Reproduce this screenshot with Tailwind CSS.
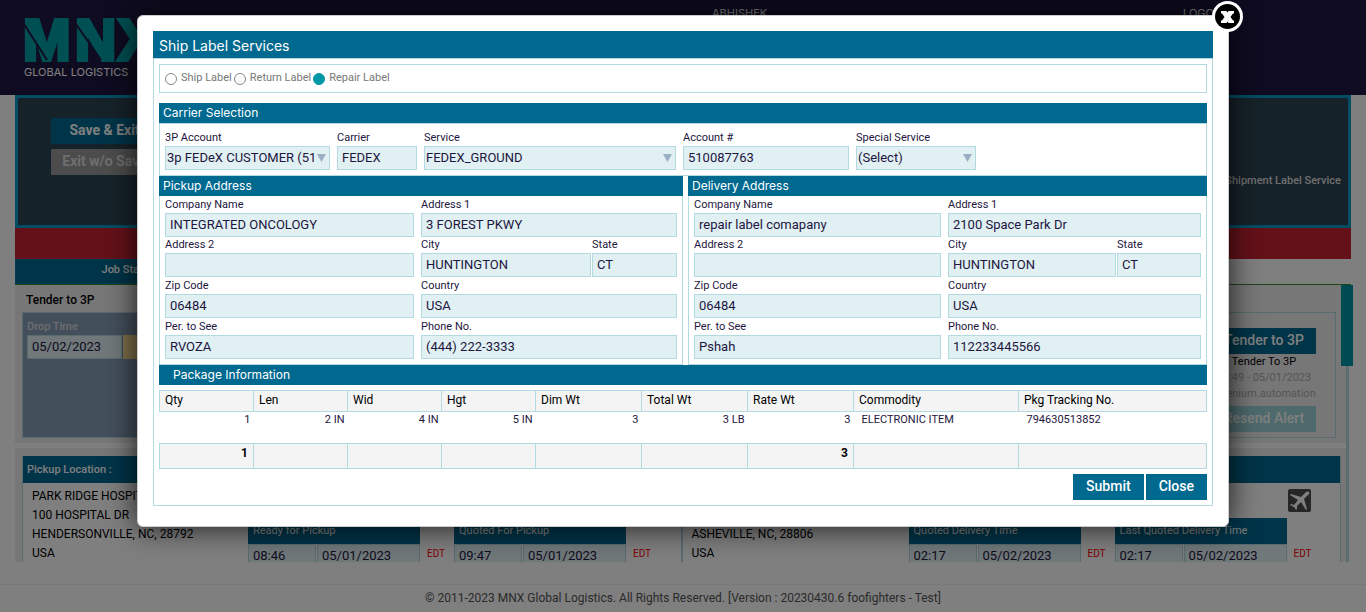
<!DOCTYPE html>
<html lang="en">
<head>
<meta charset="utf-8">
<title>MNX Global Logistics - Ship Label Services</title>
<script src="https://cdn.jsdelivr.net/npm/@tailwindcss/browser@4"></script>
</head>
<body class="relative min-h-screen overflow-hidden bg-white font-['Roboto',sans-serif] text-xs text-black">

<!-- Page header -->
<header class="flex h-[95px] bg-[#1e1640] text-white">
  <div class="w-[712px] pt-[18px] pl-6">
    <svg class="block overflow-visible" width="136" height="45" viewBox="0 0 136 45" role="img" aria-label="MNX">
      <g fill="#009fa6" stroke="#009fa6" stroke-width="4" font-family="Liberation Sans, sans-serif" font-weight="700" font-size="57">
        <text x="-1" y="42">M</text><text x="51" y="42">N</text><text x="94" y="42">X</text>
      </g>
      <path d="M0 6 23 42M52 6 77 42" stroke="#1e1640" stroke-width="2" fill="none"/>
    </svg>
    <div class="mt-[2px] font-['Inter',sans-serif] text-[11px] leading-[14px]">GLOBAL LOGISTICS</div>
  </div>
  <div class="grow pt-[6px] font-['Inter',sans-serif] text-[11px] leading-[14px]">ABHISHEK</div>
  <a href="#" class="w-[183px] pt-[6px] font-['Inter',sans-serif] text-[11px] leading-[14px]">LOGOUT</a>
</header>

<main class="mr-[13px] ml-[15px]">
  <section class="mr-[2px] flex h-[133px] justify-between border-[3px] border-[#009ac8] bg-[#2c4452] text-white">
    <div class="ml-[33px] flex w-[107px] flex-col gap-[5px] pt-5">
      <button class="h-[26px] bg-[#006990] pb-[2px] text-sm font-bold">Save &amp; Exit</button>
      <button class="h-[26px] bg-[#999999] pb-[2px] text-sm font-bold whitespace-nowrap text-[#dddddd]">Exit w/o Save</button>
    </div>
    <div class="pt-[74px] pr-[7px]"><a href="#" class="text-[11px] leading-4 font-medium text-[#dddddd]">Shipment Label Service</a></div>
  </section>
  <div class="mr-[2px] h-[31px] bg-[#c82232]"></div>
  <div class="mr-[2px] h-[26px] border-b border-[#38902c]">
    <div class="h-[25px] w-[226px] border border-[#007ba5] bg-[#006990] pt-[2px] text-center text-[11px] leading-4 font-medium text-white">Job Status</div>
  </div>

  <div class="flex h-[277px] overflow-hidden">
    <div class="grow">
      <section class="h-[158px] bg-[#eeeeee] px-[7px] pt-[7px]">
        <h2 class="pl-1 leading-4 font-medium">Tender to 3P</h2>
        <div class="mt-[4px] mr-[3px] flex h-[126px] justify-between border border-[#b0d6dc]">
          <div class="w-[600px] bg-[#869eb6] px-1 pt-[5px]">
            <label for="drop" class="block text-[11px] leading-[17px] font-medium text-[#dddddd]">Drop Time</label>
            <div class="flex gap-[1px]">
              <input id="drop" value="05/02/2023" class="h-6 w-[95px] border border-[#b0d6dc] bg-[#e0f0f3] px-1 pb-[2px] text-[13px] text-[#1e1640]">
              <input aria-label="Drop hour" class="h-6 w-10 bg-[#ffdf96]">
            </div>
          </div>
          <div class="mr-[19px] flex w-[104px] flex-col pt-[15px] text-center text-[11px] leading-4">
            <button class="h-[26px] bg-[#006990] pb-[2px] text-sm font-medium text-white">Tender to 3P</button>
            <span>Tender To 3P</span>
            <span class="text-[#aaaaaa]">12:49 - 05/01/2023</span>
            <span class="text-[#aaaaaa]">selenium.automation</span>
            <button class="mt-[4px] h-[26px] bg-[#9cd4d8] pb-[2px] text-sm font-medium text-white">Resend Alert</button>
          </div>
        </div>
      </section>
      <section class="mt-[5px] flex h-[114px] bg-[#eeeeee] pt-2 pr-[5px] pl-[7px]">
        <div class="flex-1 border-x border-[#b0d6dc] bg-white">
          <h3 class="h-[27px] bg-[#006990] px-1 text-[11px] leading-[27px] font-medium text-white">Pickup Location :</h3>
          <div class="flex">
            <address class="w-[225px] shrink-0 pt-[4px] pl-[9px] leading-[19px] whitespace-nowrap not-italic">PARK RIDGE HOSPITAL<br>100 HOSPITAL DR<br>HENDERSONVILLE, NC, 28792<br>USA</address>
            <div class="flex pt-[35px]">
              <div class="w-[172px]">
                <div class="h-[26px] bg-[#006990] px-[5px] text-[11px] leading-[25px] text-white">Ready for Pickup</div>
                <div class="flex gap-[1px]"><input aria-label="Ready time" value="08:46" class="h-6 w-[68px] border border-[#b0d6dc] bg-[#e0f0f3] px-1 pb-[2px] text-[13px] text-[#1e1640]"><input aria-label="Ready date" value="05/01/2023" class="h-6 w-[103px] border border-[#b0d6dc] bg-[#e0f0f3] px-1 pb-[2px] text-[13px] text-[#1e1640]"></div>
              </div>
              <span class="w-[34px] pt-[28px] pl-[7px] text-[10px] leading-4 text-[#ff0000]">EDT</span>
              <div class="w-[172px]">
                <div class="h-[26px] bg-[#006990] px-[5px] text-[11px] leading-[25px] text-white">Quoted For Pickup</div>
                <div class="flex gap-[1px]"><input aria-label="Quoted time" value="09:47" class="h-6 w-[68px] border border-[#b0d6dc] bg-[#e0f0f3] px-1 pb-[2px] text-[13px] text-[#1e1640]"><input aria-label="Quoted date" value="05/01/2023" class="h-6 w-[103px] border border-[#b0d6dc] bg-[#e0f0f3] px-1 pb-[2px] text-[13px] text-[#1e1640]"></div>
              </div>
              <span class="w-[34px] pt-[28px] pl-[7px] text-[10px] leading-4 text-[#ff0000]">EDT</span>
            </div>
          </div>
        </div>
        <div class="flex-1 border-x border-[#b0d6dc] bg-white">
          <h3 class="h-[27px] bg-[#006990] px-1 text-[11px] leading-[27px] font-medium text-white">Delivery Location :</h3>
          <div class="relative flex">
            <address class="w-[226px] shrink-0 pt-[4px] pl-[9px] leading-[19px] whitespace-nowrap not-italic">MISSION HOSPITAL<br>509 BILTMORE AVE<br>ASHEVILLE, NC, 28806<br>USA</address>
            <div class="flex pt-[35px]">
              <div class="w-[172px]">
                <div class="h-[26px] bg-[#006990] px-[5px] text-[11px] leading-[25px] text-white">Quoted Delivery Time</div>
                <div class="flex gap-[1px]"><input aria-label="Delivery time" value="02:17" class="h-6 w-[68px] border border-[#b0d6dc] bg-[#e0f0f3] px-1 pb-[2px] text-[13px] text-[#1e1640]"><input aria-label="Delivery date" value="05/02/2023" class="h-6 w-[103px] border border-[#b0d6dc] bg-[#e0f0f3] px-1 pb-[2px] text-[13px] text-[#1e1640]"></div>
              </div>
              <span class="w-[34px] pt-[28px] pl-[7px] text-[10px] leading-4 text-[#ff0000]">EDT</span>
              <div class="w-[172px]">
                <div class="h-[26px] bg-[#006990] px-[5px] text-[11px] leading-[25px] text-white">Last Quoted Delivery Time</div>
                <div class="flex gap-[1px]"><input aria-label="Last delivery time" value="02:17" class="h-6 w-[68px] border border-[#b0d6dc] bg-[#e0f0f3] px-1 pb-[2px] text-[13px] text-[#1e1640]"><input aria-label="Last delivery date" value="05/02/2023" class="h-6 w-[103px] border border-[#b0d6dc] bg-[#e0f0f3] px-1 pb-[2px] text-[13px] text-[#1e1640]"></div>
              </div>
              <span class="w-[34px] pt-[28px] pl-[7px] text-[10px] leading-4 text-[#ff0000]">EDT</span>
            </div>
            <svg class="absolute top-[6px] right-[29px]" width="23" height="23" viewBox="0 0 23 23" role="img" aria-label="Air">
              <rect width="23" height="23" rx="2" fill="#4c4c4c"/>
              <path d="M21 3c-1-1-3 0-4 1l-4 4L3 5 2 6l8 5-4 5-3-1-1 1 4 2 2 3 1-1v-3l4-4 5 8 1-1-3-10 4-4c1-1 2-2 1-3z" fill="#fff"/>
            </svg>
          </div>
        </div>
      </section>
    </div>
    <div class="-ml-[5px] flex w-3 flex-col items-center">
      <div class="h-[81px] w-3 bg-[#0097a7]"></div>
      <div class="w-[3px] grow bg-[#b9dbe4]"></div>
    </div>
  </div>
</main>

<footer class="mt-[22px] border-t border-[#f0f0f0] pt-[5px] text-center leading-4 text-[#555555]">© 2011-2023 MNX Global Logistics. All Rights Reserved. [Version : 20230430.6 foofighters - Test]</footer>

<!-- Dialog over the dimmed page -->
<div class="absolute inset-0 bg-black/50 px-[137px] pt-[15px]">
  <div role="dialog" aria-labelledby="dlg-title" class="relative rounded-md border border-[#cccccc] bg-white px-[15px] pt-[15px] pb-[20px] text-[#1e1640] shadow-[0_0_30px_rgba(0,0,0,0.8)]">
    <button aria-label="Close dialog" class="absolute -top-[15px] -right-[15px]">
      <svg class="block" width="31" height="31" viewBox="0 0 31 31"><circle cx="15.500" cy="15.500" r="15.500" fill="#fff"/><circle cx="15.500" cy="15.500" r="12.500" fill="#000"/><path d="M9 10h5.500l1 1.500 1-1.500H22v2.500h-1L18.500 16l2.500 3.500h1V22h-5.500l-1-1.500-1 1.500H9v-2.500h1l2.500-3.500L10 12.500H9z" fill="#fff"/></svg>
    </button>

    <h1 id="dlg-title" class="h-[27px] bg-[#006990] px-[6px] font-['Inter',sans-serif] text-sm leading-[30px] text-white">Ship Label Services</h1>
    <form class="border border-[#b3dae0] px-[5px] pt-[5px] pb-[5px]">
      <fieldset class="flex h-[29px] items-center gap-[2px] border border-[#b3dae0] px-[5px] text-[11px] text-[#777777]">
        <label class="flex items-center gap-1"><input type="radio" name="label" class="size-3 appearance-none rounded-full border border-[#888888] checked:border-[#0097a7] checked:bg-[#0097a7]">Ship Label</label>
        <label class="flex items-center gap-1"><input type="radio" name="label" class="size-3 appearance-none rounded-full border border-[#888888] checked:border-[#0097a7] checked:bg-[#0097a7]">Return Label</label>
        <label class="flex items-center gap-1"><input type="radio" name="label" checked class="size-3 appearance-none rounded-full border border-[#888888] checked:border-[#0097a7] checked:bg-[#0097a7]">Repair Label</label>
      </fieldset>

      <h2 class="mt-[10px] h-5 bg-[#006990] px-1 font-['Inter',sans-serif] text-xs leading-[19px] text-white">Carrier Selection</h2>
      <div class="flex h-[53px] gap-[7px] border border-[#b3dae0] px-[5px] pt-[5px]">
        <div class="w-[165px]">
          <label for="acct3p" class="block text-[11px] leading-[17px]">3P Account</label>
          <div class="relative">
            <select id="acct3p" class="block h-6 w-full appearance-none border border-[#b3dae0] bg-[#e0f0f3] pr-[14px] pl-px text-[13px]"><option>3p FEDeX CUSTOMER (510087763)</option></select>
            <svg class="pointer-events-none absolute top-2 right-1" width="9" height="8" viewBox="0 0 9 8"><path d="M0 0h9L4.500 8z" fill="#9ab0c2"/></svg>
          </div>
        </div>
        <div class="w-20"><label for="carrier" class="block text-[11px] leading-[17px]">Carrier</label><input id="carrier" value="FEDEX" class="block h-6 w-full border border-[#b3dae0] bg-[#e0f0f3] px-1 pb-[2px] text-[13px]"></div>
        <div class="w-[252px]">
          <label for="service" class="block text-[11px] leading-[17px]">Service</label>
          <div class="relative">
            <select id="service" class="block h-6 w-full appearance-none border border-[#b3dae0] bg-[#e0f0f3] pr-[14px] pl-px text-[13px]"><option>FEDEX_GROUND</option></select>
            <svg class="pointer-events-none absolute top-2 right-1" width="9" height="8" viewBox="0 0 9 8"><path d="M0 0h9L4.500 8z" fill="#9ab0c2"/></svg>
          </div>
        </div>
        <div class="w-[166px]"><label for="account" class="block text-[11px] leading-[17px]">Account #</label><input id="account" value="510087763" class="block h-6 w-full border border-[#b3dae0] bg-[#e0f0f3] px-1 pb-[2px] text-[13px]"></div>
        <div class="w-[120px]">
          <label for="special" class="block text-[11px] leading-[17px]">Special Service</label>
          <div class="relative">
            <select id="special" class="block h-6 w-full appearance-none border border-[#b3dae0] bg-[#e0f0f3] pr-[14px] pl-px text-[13px]"><option>(Select)</option></select>
            <svg class="pointer-events-none absolute top-2 right-1" width="9" height="8" viewBox="0 0 9 8"><path d="M0 0h9L4.500 8z" fill="#9ab0c2"/></svg>
          </div>
        </div>
      </div>

      <div class="grid grid-cols-[524fr_519fr] gap-[5px]">
        <section>
          <h2 class="h-5 bg-[#006990] px-1 font-['Inter',sans-serif] text-xs leading-[19px] text-white">Pickup Address</h2>
          <div class="grid grid-cols-[249fr_256fr] gap-x-[7px] border-x border-b border-[#b3dae0] px-[5px] pb-[5px]">
            <div><label for="p-co" class="block text-[11px] leading-[17px]">Company Name</label><input id="p-co" value="INTEGRATED ONCOLOGY" class="block h-6 w-full border border-[#b3dae0] bg-[#e0f0f3] px-1 pb-[2px] text-[13px]"></div>
            <div><label for="p-a1" class="block text-[11px] leading-[17px]">Address 1</label><input id="p-a1" value="3 FOREST PKWY" class="block h-6 w-full border border-[#b3dae0] bg-[#e0f0f3] px-1 pb-[2px] text-[13px]"></div>
            <div><label for="p-a2" class="block text-[11px] leading-4">Address 2</label><input id="p-a2" class="block h-6 w-full border border-[#b3dae0] bg-[#e0f0f3] px-1 pb-[2px] text-[13px]"></div>
            <div class="grid grid-cols-[2fr_1fr] gap-px">
              <div><label for="p-city" class="block text-[11px] leading-4">City</label><input id="p-city" value="HUNTINGTON" class="block h-6 w-full border border-[#b3dae0] bg-[#e0f0f3] px-1 pb-[2px] text-[13px]"></div>
              <div><label for="p-st" class="block text-[11px] leading-4">State</label><input id="p-st" value="CT" class="block h-6 w-full border border-[#b3dae0] bg-[#e0f0f3] px-1 pb-[2px] text-[13px]"></div>
            </div>
            <div><label for="p-zip" class="block text-[11px] leading-[17px]">Zip Code</label><input id="p-zip" value="06484" class="block h-6 w-full border border-[#b3dae0] bg-[#e0f0f3] px-1 pb-[2px] text-[13px]"></div>
            <div><label for="p-ctry" class="block text-[11px] leading-[17px]">Country</label><input id="p-ctry" value="USA" class="block h-6 w-full border border-[#b3dae0] bg-[#e0f0f3] px-1 pb-[2px] text-[13px]"></div>
            <div><label for="p-per" class="block text-[11px] leading-[17px]">Per. to See</label><input id="p-per" value="RVOZA" class="block h-6 w-full border border-[#b3dae0] bg-[#e0f0f3] px-1 pb-[2px] text-[13px]"></div>
            <div><label for="p-ph" class="block text-[11px] leading-[17px]">Phone No.</label><input id="p-ph" value="(444) 222-3333" class="block h-6 w-full border border-[#b3dae0] bg-[#e0f0f3] px-1 pb-[2px] text-[13px]"></div>
          </div>
        </section>
        <section>
          <h2 class="h-5 bg-[#006990] px-1 font-['Inter',sans-serif] text-xs leading-[19px] text-white">Delivery Address</h2>
          <div class="grid grid-cols-[247fr_253fr] gap-x-[7px] border-x border-b border-[#b3dae0] px-[5px] pb-[5px]">
            <div><label for="d-co" class="block text-[11px] leading-[17px]">Company Name</label><input id="d-co" value="repair label comapany" class="block h-6 w-full border border-[#b3dae0] bg-[#e0f0f3] px-1 pb-[2px] text-[13px]"></div>
            <div><label for="d-a1" class="block text-[11px] leading-[17px]">Address 1</label><input id="d-a1" value="2100 Space Park Dr" class="block h-6 w-full border border-[#b3dae0] bg-[#e0f0f3] px-1 pb-[2px] text-[13px]"></div>
            <div><label for="d-a2" class="block text-[11px] leading-4">Address 2</label><input id="d-a2" class="block h-6 w-full border border-[#b3dae0] bg-[#e0f0f3] px-1 pb-[2px] text-[13px]"></div>
            <div class="grid grid-cols-[2fr_1fr] gap-px">
              <div><label for="d-city" class="block text-[11px] leading-4">City</label><input id="d-city" value="HUNTINGTON" class="block h-6 w-full border border-[#b3dae0] bg-[#e0f0f3] px-1 pb-[2px] text-[13px]"></div>
              <div><label for="d-st" class="block text-[11px] leading-4">State</label><input id="d-st" value="CT" class="block h-6 w-full border border-[#b3dae0] bg-[#e0f0f3] px-1 pb-[2px] text-[13px]"></div>
            </div>
            <div><label for="d-zip" class="block text-[11px] leading-[17px]">Zip Code</label><input id="d-zip" value="06484" class="block h-6 w-full border border-[#b3dae0] bg-[#e0f0f3] px-1 pb-[2px] text-[13px]"></div>
            <div><label for="d-ctry" class="block text-[11px] leading-[17px]">Country</label><input id="d-ctry" value="USA" class="block h-6 w-full border border-[#b3dae0] bg-[#e0f0f3] px-1 pb-[2px] text-[13px]"></div>
            <div><label for="d-per" class="block text-[11px] leading-[17px]">Per. to See</label><input id="d-per" value="Pshah" class="block h-6 w-full border border-[#b3dae0] bg-[#e0f0f3] px-1 pb-[2px] text-[13px]"></div>
            <div><label for="d-ph" class="block text-[11px] leading-[17px]">Phone No.</label><input id="d-ph" value="112233445566" class="block h-6 w-full border border-[#b3dae0] bg-[#e0f0f3] px-1 pb-[2px] text-[13px]"></div>
          </div>
        </section>
      </div>

      <h2 class="h-5 bg-[#006990] px-[14px] font-['Inter',sans-serif] text-xs leading-[19px] text-white">Package Information</h2>
      <table class="mt-[5px] w-full table-fixed border-collapse">
        <colgroup><col class="w-[94px]"><col class="w-[94px]"><col class="w-[94px]"><col class="w-[94px]"><col class="w-[106px]"><col class="w-[106px]"><col class="w-[106px]"><col class="w-[165px]"><col></colgroup>
        <thead>
          <tr class="h-[21px] bg-[#f4f4f4] text-left text-black [&>th]:border [&>th]:border-[#b3dae0] [&>th]:px-[5px] [&>th]:pb-[2px] [&>th]:font-normal">
            <th>Qty</th><th>Len</th><th>Wid</th><th>Hgt</th><th>Dim Wt</th><th>Total Wt</th><th>Rate Wt</th><th>Commodity</th><th>Pkg Tracking No.</th>
          </tr>
        </thead>
        <tbody>
          <tr class="h-8 text-right align-top text-[11px] leading-4 [&>td]:pr-[3px]">
            <td>1</td><td>2 IN</td><td>4 IN</td><td>5 IN</td><td>3</td><td>3 LB</td><td>3</td><td class="pl-2 text-left">ELECTRONIC ITEM</td><td class="pl-2 text-left">794630513852</td>
          </tr>
        </tbody>
        <tfoot>
          <tr class="h-[25px] bg-[#f4f4f4] text-right align-top leading-[18px] font-bold text-black [&>td]:border [&>td]:border-[#b3dae0] [&>td]:pr-[5px]">
            <td>1</td><td></td><td></td><td></td><td></td><td></td><td>3</td><td></td><td></td>
          </tr>
        </tfoot>
      </table>
      <div class="mt-[5px] flex justify-end gap-[2px] text-sm leading-6 font-medium text-white">
        <button type="button" class="h-[26px] bg-[#006990] px-[13px] pb-[2px]">Submit</button>
        <button type="button" class="h-[26px] bg-[#006990] px-[13px] pb-[2px]">Close</button>
      </div>
    </form>
  </div>
</div>
</body>
</html>
